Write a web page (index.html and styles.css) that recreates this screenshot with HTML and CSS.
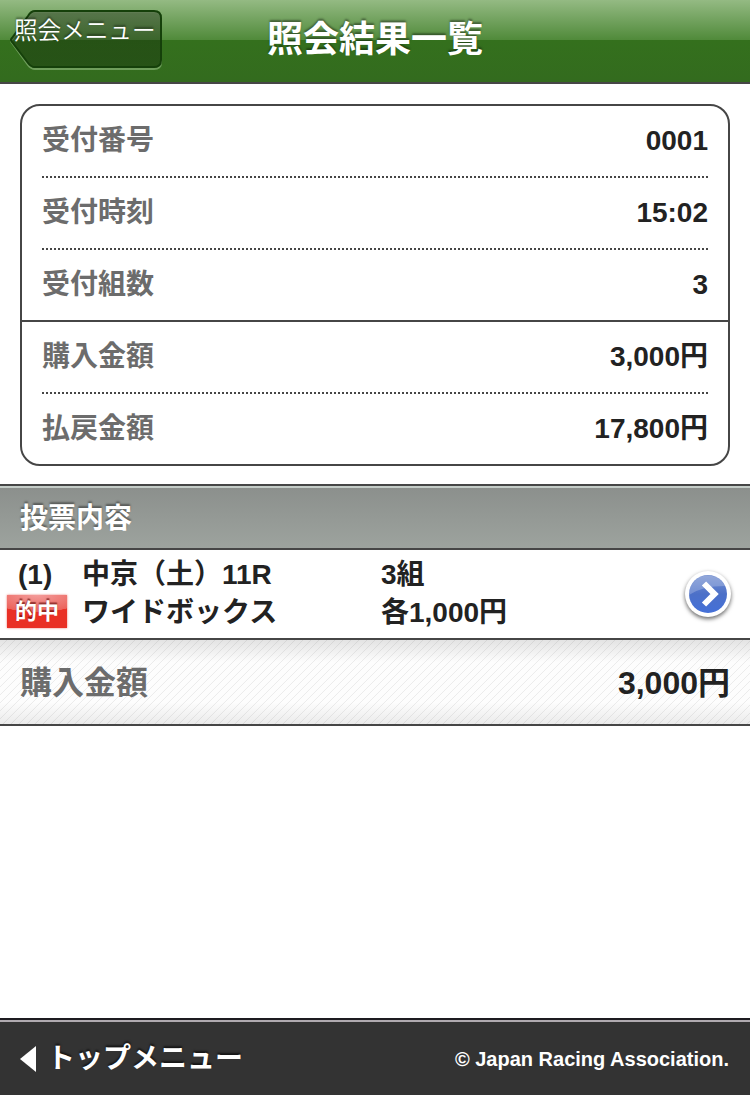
FILE: index.html
```
<!DOCTYPE html>
<html lang="ja">
<head>
    <meta charset="UTF-8">
    <meta name="viewport" content="width=device-width, initial-scale=1.0">
    <title>照会結果一覧</title>
    <link rel="stylesheet" href="styles.css">
</head>
<body>
    <header class="header">
        <a class="back" href="#">
            <svg class="back-shape" width="154" height="62" viewBox="0 0 154 62">
                <defs>
                    <linearGradient id="backFill" x1="0" y1="0" x2="0" y2="1">
                        <stop offset="0" stop-color="#000" stop-opacity=".32"/>
                        <stop offset=".5" stop-color="#000" stop-opacity=".27"/>
                        <stop offset="1" stop-color="#000" stop-opacity=".24"/>
                    </linearGradient>
                </defs>
                <path d="M25 2H144Q151 2 151 9V52Q151 59 144 59H25Q21 59 18 55L2 33Q0 31 2 29L18 7Q21 2 25 2Z" fill="none" stroke="#8fb87d" stroke-opacity=".65" stroke-width="2"/>
                <path d="M25 1H144Q151 1 151 8V50Q151 57 144 57H25Q21 57 18 53L2 32Q0 30 2 28L18 6Q21 1 25 1Z" fill="url(#backFill)" stroke="#15400a" stroke-width="2"/>
            </svg>
            <span class="back-text">照会メニュー</span>
        </a>
        <h1>照会結果一覧</h1>
    </header>

    <main>
        <!-- Receipt summary -->
        <dl class="summary">
            <div class="row"><dt>受付番号</dt><dd>0001</dd></div>
            <div class="row"><dt>受付時刻</dt><dd>15:02</dd></div>
            <div class="row solid"><dt>受付組数</dt><dd>3</dd></div>
            <div class="row"><dt>購入金額</dt><dd>3,000円</dd></div>
            <div class="row"><dt>払戻金額</dt><dd>17,800円</dd></div>
        </dl>

        <!-- Bets -->
        <h2>投票内容</h2>
        <a class="bet" href="#">
            <span class="num">(1)</span>
            <span>中京（土）11R</span>
            <span>3組</span>
            <span class="hit">的中</span>
            <span>ワイドボックス</span>
            <span>各1,000円</span>
            <svg class="arrow" width="56" height="56" viewBox="0 0 56 56">
                <defs>
                    <linearGradient id="blue" x1="0" y1="0" x2="0" y2="1">
                        <stop offset="0" stop-color="#7590d0"/>
                        <stop offset=".5" stop-color="#4c70c8"/>
                        <stop offset="1" stop-color="#4470d8"/>
                    </linearGradient>
                </defs>
                <circle class="arrow-ring" cx="28" cy="27" r="23"/>
                <circle cx="28" cy="27" r="19" fill="url(#blue)"/>
                <path d="M9 28A19 19 0 0 1 45 19Q22 19 9 28Z" fill="#fff" fill-opacity=".22"/>
                <path d="M24 16.500L34.500 27L24 37.500" fill="none" stroke="#fff" stroke-width="6"/>
            </svg>
        </a>

        <div class="total">
            <span class="total-label">購入金額</span>
            <span>3,000円</span>
        </div>
    </main>

    <footer>
        <a class="top-link" href="#">
            <svg width="16" height="26" viewBox="0 0 16 26"><path d="M16 0V26L0 13Z" fill="#fff"/></svg>
            <span>トップメニュー</span>
        </a>
        <small>© Japan Racing Association.</small>
    </footer>
</body>
</html>
```

FILE: styles.css
```
* {
    box-sizing: border-box;
}

body {
    display: flex;
    flex-direction: column;
    min-height: 1095px;
    margin: 0;
    background-color: #fff;
    color: #222;
    font-family: "Liberation Sans", "Noto Sans CJK JP", sans-serif;
    font-size: 28px;
    font-weight: bold;
    line-height: 38px;
}

a {
    color: inherit;
    text-decoration: none;
}

main {
    flex: 1;
}

.header {
    position: relative;
    height: 84px;
    border-bottom: 2px solid #464646;
    background: linear-gradient(#94ba83 0, #508a3a 40px, #34701d 40px, #336b1e 82px);
}

.header h1 {
    margin: 0;
    color: #fff;
    font-size: 36px;
    line-height: 80px;
    text-align: center;
    text-shadow: 0 -2px 2px rgba(0, 0, 0, 0.4);
}

.back {
    position: absolute;
    top: 10px;
    left: 10px;
    color: #fff;
    font-family: "Noto Sans CJK JP", sans-serif;
    font-size: 23.6px;
    font-weight: 350;
}

.back-shape {
    display: block;
}

.back-text {
    position: absolute;
    top: 0;
    left: 4px;
    white-space: nowrap;
    text-shadow: 0 -2px 2px rgba(0, 0, 0, 0.4);
}

.summary {
    margin: 20px 20px 18px;
    border: 2px solid #464646;
    border-radius: 20px;
}

.row {
    display: flex;
    justify-content: space-between;
    height: 72px;
    padding: 0 20px;
    line-height: 70px;
    background: repeating-linear-gradient(90deg, #464646 0 2px, transparent 2px 4px) 20px 100% / 666px 2px no-repeat;
}

.row:last-child {
    height: 70px;
    background: none;
}

.row.solid {
    border-bottom: 2px solid #464646;
    background: none;
}

dt {
    color: #6c6c6c;
}

dd {
    margin: 0;
}

h2 {
    height: 66px;
    margin: 0;
    padding-left: 20px;
    border-top: 2px solid #464646;
    border-bottom: 2px solid #464646;
    background: linear-gradient(#8b8f8c, #9da39e);
    box-shadow: inset 0 2px #c5cdc8;
    color: #fff;
    font-size: 28px;
    line-height: 66px;
    text-shadow: 0 -2px 2px rgba(0, 0, 0, 0.4);
}

.bet {
    position: relative;
    display: grid;
    grid-template-columns: 75px 299px 1fr;
    grid-auto-rows: 38px;
    height: 90px;
    padding: 6px 0 0 7px;
    border-bottom: 2px solid #464646;
}

.num {
    padding-left: 11px;
}

.hit {
    width: 60px;
    height: 33px;
    margin-top: 1px;
    background: radial-gradient(ellipse 50px 17px at 50% 0, #f39c9a 0, #ec625b 98%, #e93025 100%);
    box-shadow: 0 0 2px rgba(230, 60, 50, 0.7);
    color: #fff;
    font-size: 22px;
    line-height: 34px;
    text-align: center;
    text-shadow: 0 -2px 1px rgba(90, 0, 0, 0.6);
}

.arrow {
    position: absolute;
    top: 17px;
    right: 14px;
    overflow: visible;
}

.arrow-ring {
    fill: #fff;
    filter: drop-shadow(0 2px 2px rgba(0, 0, 0, 0.6));
}

.total {
    display: flex;
    justify-content: space-between;
    height: 86px;
    padding: 0 20px;
    border-bottom: 2px solid #464646;
    background:
        linear-gradient(rgba(0, 0, 0, 0.1), transparent 22px, transparent 62px, rgba(0, 0, 0, 0.07)),
        repeating-linear-gradient(135deg, #fdfdfd 0 4.200px, #ebebeb 4.900px, #fdfdfd 5.657px);
    font-size: 32px;
    line-height: 86px;
}

.total-label {
    color: #6c6c6c;
}

footer {
    display: flex;
    align-items: center;
    justify-content: space-between;
    height: 77px;
    padding: 2px 21px 0 20px;
    border-top: 2px solid #1d1b20;
    background-color: #333;
    box-shadow: inset 0 2px #b0aab0;
    color: #fff;
}

.top-link {
    display: flex;
    align-items: center;
    gap: 11px;
    text-shadow: 0 -2px 2px rgba(0, 0, 0, 0.6);
}

.top-link span {
    padding-top: 1px;
}

small {
    font-size: 20px;
}
```
